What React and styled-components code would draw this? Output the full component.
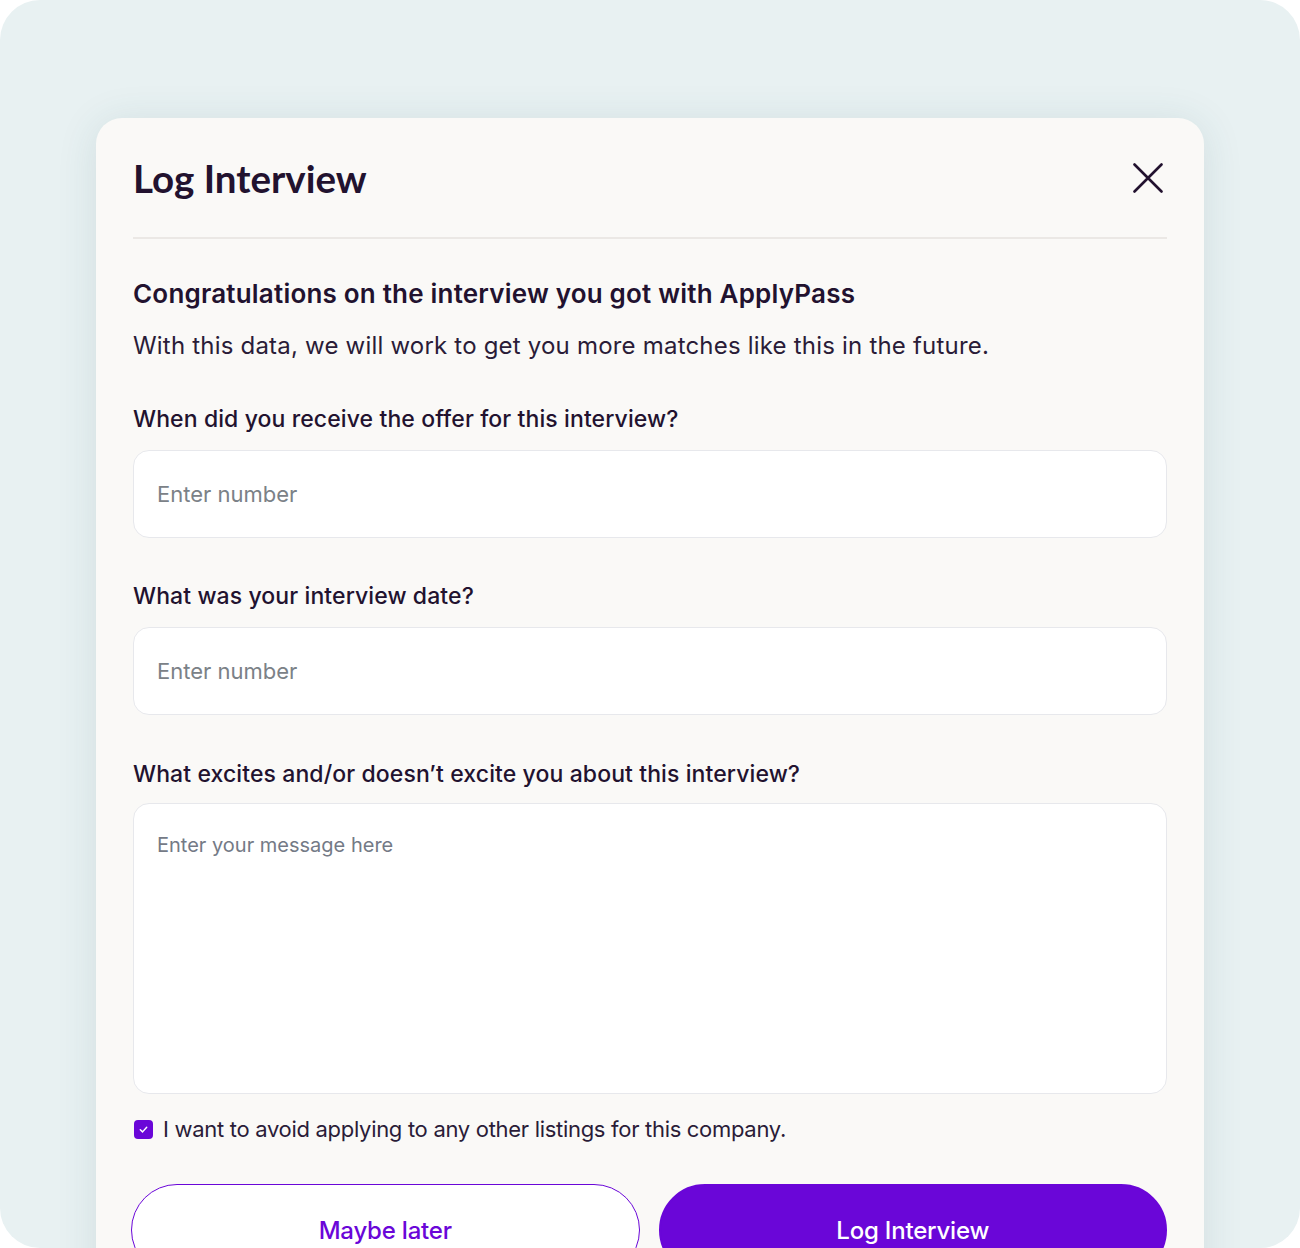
import React, { useState } from 'react';
import styled, { createGlobalStyle } from 'styled-components';

const Global = createGlobalStyle`
  html, body { margin: 0; padding: 0; background: #ffffff; }
  body { font-family: Inter, "Noto Sans", sans-serif; color: #22122f; }
  * { box-sizing: border-box; }
`

const Backdrop = styled.div`
  width: 1300px;
  height: 1248px;
  background: #e8f1f2;
  border-radius: 40px;
  overflow: hidden;
  padding: 118px 96px 0 96px;
`

const Modal = styled.div`
  background: #faf9f7;
  border-radius: 26px;
  box-shadow: 0 4px 40px rgba(40, 90, 100, 0.12);
  padding: 28px 37px 60px 37px;
  min-height: 1200px;
`

const Header = styled.div`
  display: flex;
  align-items: center;
  justify-content: space-between;
  height: 93px;
  padding-bottom: 28px;
  border-bottom: 2px solid #ebe8e5;
`

const Title = styled.h1`
  margin: 0;
  font-family: Lato, sans-serif;
  font-weight: 700;
  font-size: 38.5px;
  color: #22122f;
`

const CloseButton = styled.button`
  border: 0;
  background: none;
  padding: 0;
  margin-right: 4px;
  width: 30px;
  height: 30px;
  display: flex;
  align-items: center;
  justify-content: center;
  cursor: pointer;
`

const Intro = styled.div`
  padding-top: 39px;
`

const Heading = styled.h2`
  margin: 0;
  font-size: 26px;
  font-weight: 600;
  letter-spacing: 0.2px;
  color: #22122f;
`

const Lead = styled.p`
  margin: 22px 0 0 0;
  font-size: 24px;
  font-weight: 400;
  letter-spacing: 0.2px;
  color: #2a1c38;
`

const Field = styled.div`
  margin-top: ${(p) => p.top}px;
`

const Label = styled.label`
  display: block;
  font-size: 23px;
  font-weight: 500;
  letter-spacing: 0.1px;
  color: #22122f;
  margin-bottom: ${(p) => p.gap || 17}px;
`

const Input = styled.input`
  display: block;
  width: 100%;
  height: 88px;
  border: 1.5px solid #e7e8ec;
  border-radius: 16px;
  background: #ffffff;
  padding: 0 23px;
  font-family: Inter, sans-serif;
  font-size: 22px;
  color: #22122f;
  outline: none;
  &::placeholder { color: #7b8187; letter-spacing: 0; }
`

const TextArea = styled.textarea`
  display: block;
  width: 100%;
  height: 291px;
  border: 1.5px solid #e7e8ec;
  border-radius: 16px;
  background: #ffffff;
  padding: 29px 23px;
  font-family: Inter, sans-serif;
  font-size: 20px;
  resize: none;
  outline: none;
  &::placeholder { color: #747a86; letter-spacing: 0; }
`

const CheckRow = styled.label`
  display: flex;
  align-items: center;
  gap: 10px;
  margin-top: 22px;
  font-size: 22px;
  letter-spacing: -0.3px;
  color: #2a1c38;
  cursor: pointer;
`

const Box = styled.span`
  width: 19px;
  height: 19px;
  border-radius: 4px;
  background: ${(p) => (p.checked ? '#6a06d8' : '#fff')};
  border: ${(p) => (p.checked ? 'none' : '1.5px solid #b9b4c0')};
  display: flex;
  align-items: center;
  justify-content: center;
  margin-left: 1px;
`

const Buttons = styled.div`
  display: grid;
  grid-template-columns: 1fr 1fr;
  gap: 19px;
  margin-top: 42px;
  margin-left: -2px;
`

const Button = styled.button`
  height: 92px;
  border-radius: 46px;
  font-family: Inter, sans-serif;
  font-size: 24px;
  font-weight: 500;
  letter-spacing: -0.2px;
  cursor: pointer;
  border: ${(p) => (p.primary ? '2px solid #6a06d8' : '1.5px solid #6a06d8')};
  background: ${(p) => (p.primary ? '#6a06d8' : '#ffffff')};
  color: ${(p) => (p.primary ? '#ffffff' : '#6a06d8')};
`

export default function App() {
  const [avoid, setAvoid] = useState(true)
  return (
    <>
      <Global />
      <Backdrop>
        <Modal>
          <Header>
            <Title>Log Interview</Title>
            <CloseButton aria-label="Close">
              <svg width="30" height="30" viewBox="0 0 30 30">
                <path d="M1.5 1.5 L28.5 28.5 M28.5 1.5 L1.5 28.5" stroke="#22122f" strokeWidth="2.6" strokeLinecap="round" />
              </svg>
            </CloseButton>
          </Header>
          <Intro>
            <Heading>Congratulations on the interview you got with ApplyPass</Heading>
            <Lead>With this data, we will work to get you more matches like this in the future.</Lead>
          </Intro>
          <Field top={45}>
            <Label>When did you receive the offer for this interview?</Label>
            <Input placeholder="Enter number" />
          </Field>
          <Field top={44}>
            <Label>What was your interview date?</Label>
            <Input placeholder="Enter number" />
          </Field>
          <Field top={45}>
            <Label gap={15}>What excites and/or doesn’t excite you about this interview?</Label>
            <TextArea placeholder="Enter your message here" />
          </Field>
          <CheckRow onClick={() => setAvoid(!avoid)}>
            <Box checked={avoid}>
              {avoid && (
                <svg width="11" height="11" viewBox="0 0 12 12">
                  <path d="M2.5 6.3 L5 8.6 L9.5 3.6" stroke="#fff" strokeWidth="1.6" fill="none" strokeLinecap="round" strokeLinejoin="round" />
                </svg>
              )}
            </Box>
            I want to avoid applying to any other listings for this company.
          </CheckRow>
          <Buttons>
            <Button>Maybe later</Button>
            <Button primary>Log Interview</Button>
          </Buttons>
        </Modal>
      </Backdrop>
    </>
  )
}
